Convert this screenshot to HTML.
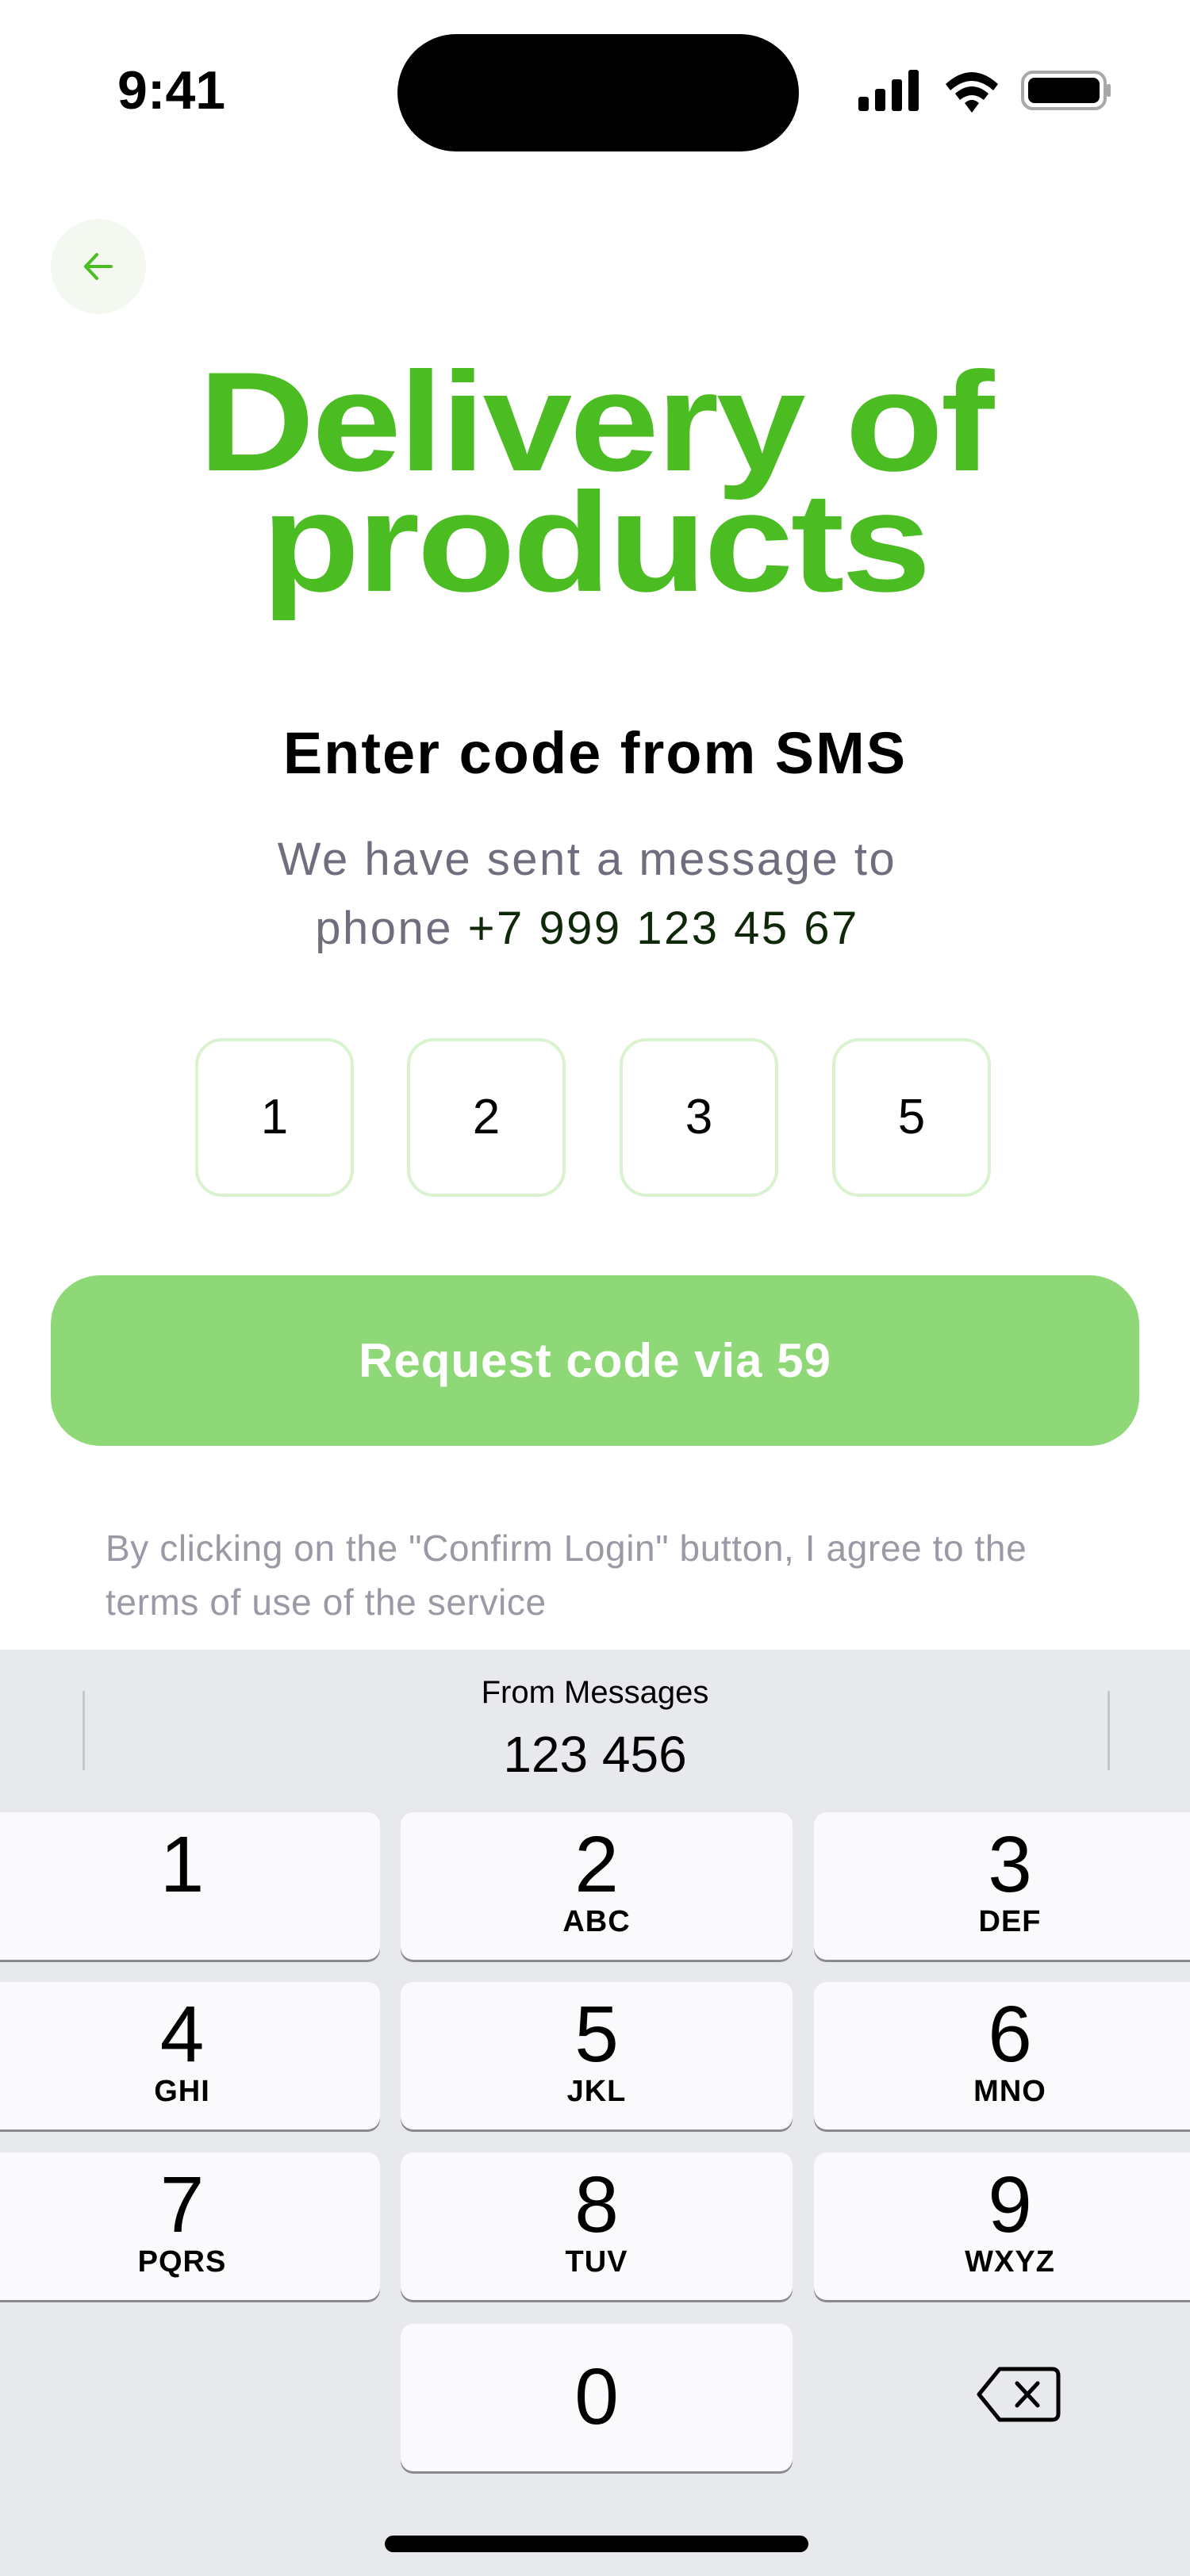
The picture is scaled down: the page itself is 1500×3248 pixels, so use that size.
<!DOCTYPE html>
<html><head><meta charset="utf-8"><style>
*{margin:0;padding:0;box-sizing:border-box}
body{width:1500px;height:3248px;background:#fff;position:relative;overflow:hidden;font-family:"Liberation Sans",sans-serif}
.a{position:absolute}
.c{position:absolute;left:0;width:1500px;text-align:center}
.otp{position:absolute;top:1309px;width:200px;height:200px;border:4px solid #d9f2cf;border-radius:34px;font-size:62px;line-height:192px;text-align:center;color:#000}
.kb{position:absolute;left:0;top:2080px;width:1500px;height:1168px;background:#e8e9ed}
.key{position:absolute;height:186px;background:#fafafc;border-radius:16px;box-shadow:0 3px 0 #898a8d;text-align:center;color:#000}
.key .n{display:block;font-size:100px;line-height:100px;margin-top:16px}
.key .l{display:block;font-size:38px;font-weight:bold;line-height:44px;letter-spacing:1px}
</style></head><body>
<div class="a" style="left:148px;top:76px;font-size:68px;font-weight:bold;line-height:76px">9:41</div>
<div class="a" style="left:501px;top:43px;width:506px;height:148px;background:#000;border-radius:74px"></div>
<svg class="a" style="left:1080px;top:84px" width="320" height="60" viewBox="0 0 320 60">
<rect x="2" y="38" width="13" height="18" rx="3"/><rect x="23" y="28" width="13" height="28" rx="3"/><rect x="44" y="16" width="13" height="40" rx="3"/><rect x="65" y="4" width="13" height="52" rx="3"/>
<path d="M112 22 Q145 -8 178 22 L172 30 Q145 6 118 30Z"/><path d="M124 34 Q145 16 166 34 L160 42 Q145 30 130 42Z"/><path d="M136 46 Q145 38 154 46 L145 58Z"/>
<rect x="209" y="7" width="104" height="46" rx="13" fill="none" stroke="#a8a8a8" stroke-width="4"/><rect x="216" y="14" width="90" height="32" rx="8"/><rect x="315" y="22" width="5" height="16" rx="2" fill="#a8a8a8"/>
</svg>
<div class="a" style="left:64px;top:276px;width:120px;height:120px;border-radius:60px;background:#f3f9f0"></div>
<svg class="a" style="left:100px;top:312px" width="48" height="48" viewBox="0 0 48 48"><path d="M40 24H8M22 9L8 24L22 39" fill="none" stroke="#4bbd22" stroke-width="4" stroke-linecap="round" stroke-linejoin="round"/></svg>
<div class="c" style="top:456px;font-size:178px;font-weight:bold;line-height:152px;color:#4bbd22;letter-spacing:-3px;transform:scaleX(1.14);transform-origin:750px 0">Delivery of<br>products</div>
<div class="c" style="top:905px;font-size:74px;font-weight:bold;line-height:90px;color:#000;letter-spacing:2px">Enter code from SMS</div>
<div class="c" style="top:1040px;font-size:58px;line-height:87px;color:#6e6e7e;letter-spacing:2.5px;padding-right:20px">We have sent a message to<br>phone <span style="color:#10280a">+7 999 123 45 67</span></div>
<div class="otp" style="left:246px">1</div><div class="otp" style="left:513px">2</div><div class="otp" style="left:781px">3</div><div class="otp" style="left:1049px">5</div>
<div class="a" style="left:64px;top:1608px;width:1372px;height:215px;background:#8fd878;border-radius:62px;color:#fff;font-size:60px;font-weight:bold;text-align:center;line-height:215px;letter-spacing:1px">Request code via 59</div>
<div class="a" style="left:133px;top:1918px;width:1240px;font-size:46px;line-height:68px;color:#9a9aa6;letter-spacing:0.6px">By clicking on the "Confirm Login" button, I agree to the terms of use of the service</div>
<div class="kb">
<div class="a" style="left:104px;top:52px;width:3px;height:100px;background:#c6c7cb"></div>
<div class="a" style="left:1396px;top:52px;width:3px;height:100px;background:#c6c7cb"></div>
<div class="c" style="top:30px;font-size:40px;line-height:48px">From Messages</div>
<div class="c" style="top:94px;font-size:64px;line-height:76px">123 456</div>
<div class="key" style="left:-20px;top:205px;width:499px"><span class="n">1</span></div>
<div class="key" style="left:505px;top:205px;width:494px"><span class="n">2</span><span class="l">ABC</span></div>
<div class="key" style="left:1026px;top:205px;width:494px"><span class="n">3</span><span class="l">DEF</span></div>
<div class="key" style="left:-20px;top:419px;width:499px"><span class="n">4</span><span class="l">GHI</span></div>
<div class="key" style="left:505px;top:419px;width:494px"><span class="n">5</span><span class="l">JKL</span></div>
<div class="key" style="left:1026px;top:419px;width:494px"><span class="n">6</span><span class="l">MNO</span></div>
<div class="key" style="left:-20px;top:634px;width:499px"><span class="n">7</span><span class="l">PQRS</span></div>
<div class="key" style="left:505px;top:634px;width:494px"><span class="n">8</span><span class="l">TUV</span></div>
<div class="key" style="left:1026px;top:634px;width:494px"><span class="n">9</span><span class="l">WXYZ</span></div>
<div class="key" style="left:505px;top:850px;width:494px"><span class="n" style="margin-top:42px">0</span></div>
<svg class="a" style="left:1230px;top:903px" width="108" height="72" viewBox="0 0 108 72"><path d="M30 4H96Q104 4 104 12V60Q104 68 96 68H30L4 36Z" fill="none" stroke="#000" stroke-width="5" stroke-linejoin="round"/><path d="M52 22L78 50M78 22L52 50" stroke="#000" stroke-width="5" stroke-linecap="round"/></svg>
<div class="a" style="left:485px;top:1117px;width:534px;height:21px;background:#000;border-radius:11px"></div>
</div>
</body></html>
